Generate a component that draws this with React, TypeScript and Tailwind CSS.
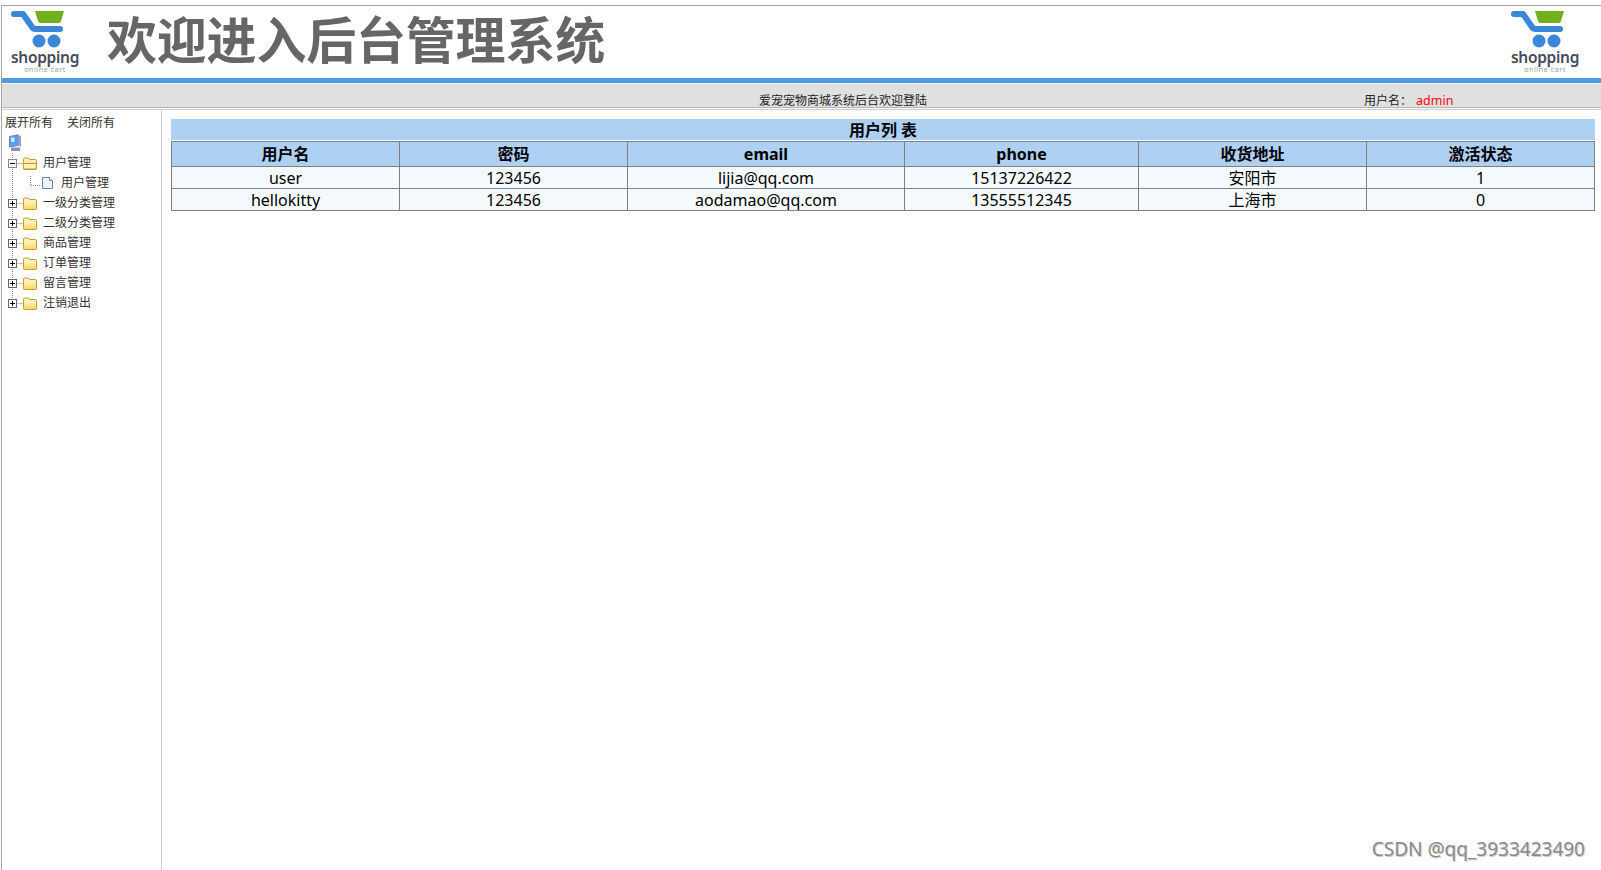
const FONT = "font-['Noto_Sans','Noto_Sans_CJK_SC',sans-serif]";

const Logo = () => (
  <div className="flex w-[72px] flex-col items-center">
    <svg width="56" height="38" viewBox="0 0 56 38" className="mr-[12px]">
      <path d="M24 1h29l-3 10c-.5 1.500-1.500 2-3 2H30c-1.500 0-2.500-.5-3-2z" fill="#6fb01c" />
      <path d="M3 4h9l9 13c1 1.500 2 2 3.500 2H49" fill="none" stroke="#3a86d8" strokeWidth="6" strokeLinecap="round" strokeLinejoin="round" />
      <circle cx="28" cy="31" r="6.500" fill="#3a86d8" />
      <circle cx="43" cy="31" r="6.500" fill="#3a86d8" />
    </svg>
    <span className="mt-[1px] text-[15.5px] leading-[17px] font-semibold tracking-[-0.3px] text-[#454a5c]">shopping</span>
    <span className="text-[7px] leading-[8px] tracking-[0.6px] text-[#9a9a9a]">online cart</span>
  </div>
);

// dotted tree connector, with optional +/- box
const Join = ({ box, last, hook }: { box?: "plus" | "minus"; last?: boolean; hook?: boolean }) => (
  <svg width="18" height="20" viewBox="0 0 18 20" className="shrink-0">
    {hook ? (
      <path d="M7.500 3v9.500H18" fill="none" stroke="#888" strokeDasharray="1 1" />
    ) : (
      <>
        <path d={last ? "M7.500 0v10" : "M7.500 0v20"} stroke="#888" strokeDasharray="1 1" />
        {box && <path d="M7.500 10.500H18" stroke="#888" strokeDasharray="1 1" />}
      </>
    )}
    {box && (
      <>
        <rect x="3.500" y="6.500" width="8" height="8" fill="#fff" stroke={box === "plus" ? "#666" : "#888"} />
        <path d="M5 10.500h5" stroke="#000" />
        {box === "plus" && <path d="M7.500 8v5" stroke="#000" />}
      </>
    )}
  </svg>
);

const Folder = ({ open }: { open?: boolean }) => (
  <svg width="16" height="20" viewBox="0 0 16 20" className="-ml-[1px] shrink-0">
    <defs>
      <linearGradient id="folderFill" x1="0" y1="0" x2="0" y2="1">
        <stop offset="0" stopColor="#fff6c8" />
        <stop offset="1" stopColor="#ffd766" />
      </linearGradient>
    </defs>
    <path d="M1.500 6.500c0-1 .5-1.500 1.500-1.500h3l1.500 1.500h6c.8 0 1 .4 1 1v8c0 .6-.4 1-1 1h-11c-.6 0-1-.4-1-1z" fill="url(#folderFill)" stroke="#c79a2e" />
    {open ? (
      <path d="M2 16l-1-5.500h13.500L14 16z" fill="#fff2bf" stroke="#c79a2e" />
    ) : (
      <path d="M2.500 8.500h11v7h-11z" fill="url(#folderFill)" />
    )}
  </svg>
);

const Page = () => (
  <svg width="14" height="20" viewBox="0 0 14 20" className="shrink-0">
    <path d="M1.500 4.500h7l3 3v8h-10z" fill="#eef3fc" stroke="#6d82b4" />
    <path d="M8.500 4.500v3h3" fill="#fff" stroke="#6d82b4" />
  </svg>
);

const Root = () => (
  <svg width="14" height="18" viewBox="0 0 14 18" className="shrink-0">
    <path d="M1.500 2.500 10 .8v10.700l-8.500 1.500z" fill="#4aa3ee" stroke="#7d83b8" />
    <path d="M10 .8l3 1.500v10.500l-3-1.300z" fill="#9a9ac4" />
    <path d="M3 13.500h9V17H3z" fill="#8d8fb8" />
    <path d="M3 3.500h3.500v4.500H3z" fill="#cfe8ff" />
  </svg>
);

const menus = ["一级分类管理", "二级分类管理", "商品管理", "订单管理", "留言管理", "注销退出"];

const Sidebar = () => (
  <aside className="w-[160px] shrink-0 border-r border-[#cfcfcf] pl-[3px] text-[12px] text-[#333]">
    <div className="mt-[4px] flex h-[17px] items-center gap-[14px]">
      <span>展开所有</span>
      <span>关闭所有</span>
    </div>
    <div className="mt-[3px] flex h-[19px] pl-[3px]">
      <Root />
    </div>
    <div className="flex h-[20px] items-center">
      <Join box="minus" />
      <Folder open />
      <span className="ml-[5px]">用户管理</span>
    </div>
    <div className="flex h-[20px] items-center">
      <Join />
      <Join hook />
      <Page />
      <span className="ml-[6px]">用户管理</span>
    </div>
    {menus.map((name, i) => (
      <div key={name} className="flex h-[20px] items-center">
        <Join box="plus" last={i === menus.length - 1} />
        <Folder />
        <span className="ml-[5px]">{name}</span>
      </div>
    ))}
  </aside>
);

const columns = [
  { title: "用户名", width: "w-[228px]" },
  { title: "密码", width: "w-[228px]" },
  { title: "email", width: "w-[277px]" },
  { title: "phone", width: "w-[234px]" },
  { title: "收货地址", width: "w-[228px]" },
  { title: "激活状态", width: "w-[228px]" },
];

const rows = [
  ["user", "123456", "lijia@qq.com", "15137226422", "安阳市", "1"],
  ["hellokitty", "123456", "aodamao@qq.com", "13555512345", "上海市", "0"],
];

export default function App() {
  return (
    <div className={`${FONT} relative h-[870px] w-full overflow-hidden bg-white pt-[5px] text-black`}>
      <div className="ml-[1px] flex h-[865px] flex-col border-t border-l border-[#a6a6a6]">
        <header className="flex h-[72px] shrink-0 items-center justify-between pr-[20px] pl-[7px]">
          <div className="flex items-center">
            <Logo />
            <h1 className="ml-[26px] pb-[4px] text-[50px] leading-[68px] font-bold tracking-[-0.2px] text-[#666]">欢迎进入后台管理系统</h1>
          </div>
          <Logo />
        </header>
        <div className="h-[5px] shrink-0 bg-[#4f9be2]" />
        <div className="h-[1px] shrink-0 bg-[#f2f2f2]" />
        <div className="flex h-[24px] shrink-0 items-end border-b border-[#b5b5b5] bg-[#e0e0e0] text-[12px] leading-[13px] text-[#222]">
          <span className="ml-[757px]">爱宠宠物商城系统后台欢迎登陆</span>
          <span className="ml-[437px]">用户名：</span>
          <span className="ml-[4px] text-[12.5px] text-[#ff0000]">admin</span>
        </div>
        <div className="mt-[1px] h-[1px] shrink-0 bg-[#cfcfcf]" />
        <div className="flex min-h-0 flex-1">
          <Sidebar />
          <main className="flex-1 pt-[9px] pr-[6px] pl-[9px]">
            <div className="h-[21px] bg-[#aed0f3] text-center text-[16px] leading-[23px] font-bold">用户列 表</div>
            <table className="mt-[1px] w-[1424px] table-fixed border-collapse text-center text-[16px] leading-[21px]">
              <thead>
                <tr className="bg-[#aed0f3]">
                  {columns.map((col) => (
                    <th key={col.title} className={`${col.width} h-[25px] border border-[#808080] p-0 font-bold`}>
                      {col.title}
                    </th>
                  ))}
                </tr>
              </thead>
              <tbody>
                {rows.map((row) => (
                  <tr key={row[0]} className="bg-[#f5faff]">
                    {row.map((cell, i) => (
                      <td key={i} className="h-[22px] border border-[#808080] p-0 pt-[2px] leading-[19px]">
                        {cell}
                      </td>
                    ))}
                  </tr>
                ))}
              </tbody>
            </table>
          </main>
        </div>
      </div>
      <span className="absolute right-[16px] bottom-[8px] text-[19px] leading-[26px] text-[#8a8a8a] [text-shadow:1px_1px_0_#cfcfcf]">CSDN @qq_3933423490</span>
    </div>
  );
}
